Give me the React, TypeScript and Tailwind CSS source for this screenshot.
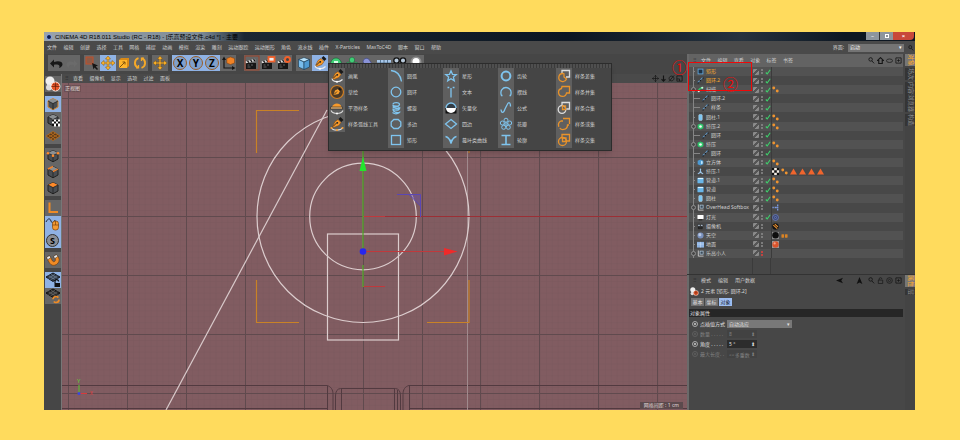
import React from "react";

const FONT = "font-['Noto_Sans','Noto_Sans_CJK_SC',sans-serif]";
const OR = "#e8922a";
const BL = "#7fc4ee";

/* ---------- icons, all on a 16 x 16 board ---------- */

const Cube = ({ face = "none", edge = "#c77a2a", fill = "#4a4e52" }: { face?: string; edge?: string; fill?: string }) => (
  <g strokeLinejoin="round">
    <path d="M8 2.5 13 5v6l-5 2.8L3 11V5z" fill={fill} stroke={edge} strokeWidth="1" />
    <path d="M8 2.5 13 5 8 7.6 3 5z" fill={face === "top" ? "#ff8a2a" : "#8b8f92"} />
    <path d="M8 7.6v6.2M3 5l5 2.6L13 5" fill="none" stroke="#222" strokeWidth=".8" />
  </g>
);

const Clapper = () => (
  <g>
    <path d="M2 8h10v6H2z" fill="#161616" />
    <path d="M1.600 6.500 11 3.800l.5 2.200-9.400 2.300z" fill="#ddd" />
    <path d="m3.500 6 1.500 1.600M6.500 5.100 8 6.800M9.500 4.300 11 6" stroke="#111" strokeWidth="1.300" />
    <path d="M3.500 10h2M7 10h2M3.500 12h3" stroke="#777" strokeWidth=".8" />
  </g>
);

const Nib = () => (
  <g>
    <path d="M3.500 10.500 6 5.500l3-2 3 3-2 3-5.200 2z" fill="#f79a2b" stroke="#7a4210" strokeWidth=".5" />
    <path d="m9.500 3 2-2 3 3-2.200 2z" fill="#181818" />
    <path d="m4 10.500 4-4" stroke="#222" strokeWidth=".9" />
    <circle cx="8.300" cy="6.800" r=".9" fill="#222" />
  </g>
);

const shapes: Record<string, React.ReactNode> = {
  undo: <path d="M2 8.500 6 4.500V7c4.500-1.600 8.500-.5 8.500 2.300 0 1.700-1.500 3.200-3.500 3.700 1.500-2.500-.5-4-5-3.200v2.700z" fill="#171717" />,
  redo: <path d="M13.500 8.500 10 5v2.200c-4-1.600-7.500-.5-7.500 2.300 0 1.500 1 2.700 2.700 3.300-1-2.500 1-3.500 4.800-2.600V12z" fill="#6b6b6b" />,
  select: (
    <g>
      <rect x="2" y="2" width="7" height="7" fill="#8d5b47" stroke="#c1502a" />
      <path d="m8 8 6 2.500-2.300 1 2.300 2.500-1 1-2.500-2.500-1 2z" fill="#151515" />
    </g>
  ),
  move: (
    <path
      d="M8 1 10.500 4H8.800v3.200H12V5.500L15 8l-3 2.500V8.800H8.800V12h1.700L8 15l-2.500-3h1.700V8.800H4v1.700L1 8l3-2.500v1.700h3.200V4H5.500z"
      fill="#ffb52b"
      stroke="#7d5310"
      strokeWidth=".5"
    />
  ),
  scale: (
    <g>
      <path d="M3 5h8v8H3z" fill="#ffb52b" />
      <path d="m3 5 2-2h8v8l-2 2V5z" fill="#d98a17" />
      <path d="M3.500 12.500 9 7M9 9.500V7H6.500" stroke="#7d5310" fill="none" />
    </g>
  ),
  rotate: (
    <g fill="none" stroke="#f6a928" strokeWidth="1.900">
      <path d="M6.500 3.200A5 5 0 0 0 6 12.600M9.500 12.800A5 5 0 0 0 10 3.400" />
      <path d="m4 12.800 2.500 0V10M12 3.200H9.500V6" strokeWidth="1.300" />
    </g>
  ),
  axis: (
    <g>
      <path d="M4 4v9h9" fill="none" stroke="#151515" strokeWidth="1.200" />
      <path d="M4 1.500 6 5H2zM15.500 13 12 11v4z" fill="#151515" />
      <path d="m10.500 2 4 1.500v4.500L10.500 9.500 6.800 8V3.500z" fill="#f08326" stroke="#7a3a0a" strokeWidth=".5" />
    </g>
  ),
  clapA: (
    <g>
      <rect x="1" y="1" width="14" height="14" fill="none" stroke="#9d4229" />
      <Clapper />
    </g>
  ),
  clapB: (
    <g>
      <Clapper />
      <rect x="8.500" y="2" width="6" height="4.500" fill="#eee" stroke="#f0602a" strokeWidth="1.800" />
    </g>
  ),
  clapC: (
    <g>
      <Clapper />
      <circle cx="11.500" cy="4.500" r="2.500" fill="#444" stroke="#f0602a" strokeWidth="2" />
    </g>
  ),
  prim: (
    <g stroke="#17364d" strokeWidth=".6" strokeLinejoin="round">
      <path d="m2.500 4.500 5.500-2 5.500 2L8 7z" fill="#b7e2fb" />
      <path d="M2.500 4.500 8 7v7.500L2.500 12z" fill="#79bdec" />
      <path d="M13.500 4.500 8 7v7.500l5.500-2.500z" fill="#4f9bd2" />
    </g>
  ),
  pen: (
    <g>
      <Nib />
      <path d="M3 10.500c.5 3.500 7 4.500 10.500 1" fill="none" stroke="#eee" strokeWidth="1.100" />
      <circle cx="8" cy="13.700" r="1" fill="#fff" />
    </g>
  ),
  nurbs: (
    <g>
      <path d="M2.500 12c-1-5 2-9 5.500-9s6.500 4 5.500 9z" fill="#3fcf76" stroke="#145c30" strokeWidth=".6" />
      <rect x="6" y="6" width="4" height="4" fill="#d8ffe6" />
    </g>
  ),
  array: (
    <g fill="#3fcf76" stroke="#145c30" strokeWidth=".5">
      <path d="m8 2 2.500 1.500v3L8 8 5.500 6.500v-3zM4 7l2.500 1.500v3L4 13l-2.500-1.500v-3zM12 7l2.500 1.500v3L12 13l-2.500-1.500v-3z" />
    </g>
  ),
  deform: <path d="M3 6c2-4 6-3 7 0 1 2 3 3 4 6-4 2-9 1-10-2z" fill="#8a93d8" stroke="#333a78" strokeWidth=".6" />,
  floor: (
    <g>
      <path d="M1 5h14v7H1z" fill="#a9c8ea" />
      <path d="M1 8h14M4.500 5v7M8 5v7M11.500 5v7" stroke="#46637f" strokeWidth=".8" />
    </g>
  ),
  camera: (
    <g fill="#b9cadb" stroke="#111" strokeWidth="1.300">
      <circle cx="4.500" cy="5.500" r="2.700" />
      <circle cx="11" cy="5.500" r="2.700" />
      <path d="M3 9h9v4H3z" fill="#333" />
    </g>
  ),
  light: (
    <g>
      <circle cx="8" cy="7" r="5.500" fill="#8f8f8f" />
      <circle cx="8" cy="6.500" r="3.500" fill="#fff" />
    </g>
  ),
  balls: (
    <g>
      <circle cx="5" cy="5" r="4.500" fill="#eee" />
      <circle cx="4" cy="11.500" r="3" fill="#ddd" />
      <circle cx="10.500" cy="10.500" r="4.500" fill="#e8582a" stroke="#fff" strokeWidth=".8" />
      <path d="M6.500 10.500h8M10.500 6.500v8M8 8c1.500 1.500 3.500 1.500 5 0" stroke="#69200b" strokeWidth=".7" fill="none" />
    </g>
  ),
  model: <Cube edge="#d98a2f" />,
  texture: (
    <g>
      <Cube edge="#1d1d1d" />
      <path d="M7 7.500h8v7H7z" fill="#fff" />
      <path d="M7 7.500h2v2H7zM11 7.500h2v2h-2zM9 9.500h2v2H9zM13 9.500h2v2h-2zM7 11.500h2v3H7zM11 11.500h2v3h-2z" fill="#111" />
    </g>
  ),
  plane: (
    <g stroke="#b46a1d" fill="#5a3a1a" strokeWidth=".9">
      <path d="M8 3.500 15 8l-7 4.500L1 8z" />
      <path d="m3.300 6.500 7 4.500M5.700 5l7 4.500M12.700 6.500l-7 4.500M10.300 5l-7 4.500" />
    </g>
  ),
  points: (
    <g>
      <Cube edge="#222" />
      <g fill="#ff8a2a"><circle cx="8" cy="7.800" r="1.300" /><circle cx="13" cy="5.300" r="1.300" /><circle cx="3" cy="5.300" r="1.300" /></g>
    </g>
  ),
  edges: (
    <g>
      <Cube edge="#222" />
      <path d="M3 5 8 2.500M8 7.600 13 5" stroke="#f2812a" strokeWidth="1.400" fill="none" />
    </g>
  ),
  polys: <Cube edge="#222" face="top" />,
  corner: <path d="M4.500 2.500v9.500H13" fill="none" stroke="#ee8b26" strokeWidth="2" />,
  mouse: (
    <g>
      <path d="M1 6c2-4 4-4 5-1s3 2 4-1" fill="none" stroke="#1f2a3a" strokeWidth="1" />
      <rect x="7.500" y="5" width="6" height="9" rx="2.600" fill="#f39a33" stroke="#7d430c" strokeWidth=".7" />
      <path d="M10.500 5v4M7.500 9h6" stroke="#7d430c" strokeWidth=".7" />
    </g>
  ),
  magnet: (
    <g>
      <path d="M1.500 5.500 4.500 3.500 7.500 9c1.500 2 4-.5 2.500-2.500L8.500 4.500l3-2 2 3c3 5-5 11.500-9 5.500z" fill="#ef8b26" stroke="#6d3806" strokeWidth=".6" />
      <path d="m1.500 5.500 3-2 1.200 2.200-3 2zM8.500 4.500l3-2 1.300 2-3 2z" fill="#eee" stroke="#222" strokeWidth=".5" />
    </g>
  ),
  gridLock: (
    <g>
      <path d="M8 1 15 5 8 9.500 1 5z" fill="#2f3a48" stroke="#14181e" />
      <path d="m3.500 3.700 7 4M6 2.400l6.500 4M12.500 3.700l-7 4M10 2.400l-6.500 4" stroke="#7d8fa5" strokeWidth=".6" />
      <path d="M10 11V9.500a1.800 1.800 0 0 1 3.600 0" fill="none" stroke="#111" strokeWidth="1.200" />
      <path d="M9.500 11H15v4H9.500z" fill="#111" />
    </g>
  ),
  gridTurn: (
    <g>
      <path d="M8 1 15 5 8 9.500 1 5z" fill="#2a2a2a" stroke="#111" />
      <path d="m3.500 3.700 7 4M6 2.400l6.500 4M12.500 3.700l-7 4M10 2.400l-6.500 4" stroke="#777" strokeWidth=".6" />
      <circle cx="11" cy="11.500" r="3" fill="none" stroke="#ee8b26" strokeWidth="1.700" strokeDasharray="7 2.400" />
    </g>
  ),
  sketch: (
    <g>
      <circle cx="8" cy="8" r="6.500" fill="#4c3a26" stroke="#d07f24" strokeWidth="1.200" />
      <path d="M4.500 11 6 6.500 9 5l2 2-1.500 3z" fill="#f9a02d" />
      <path d="m9 5 1.500-1.500 2 2L11 7z" fill="#181818" />
      <path d="m5 10.500 3-3" stroke="#222" strokeWidth=".8" />
    </g>
  ),
  smooth: (
    <g>
      <path d="M3 7c1-4 8-5 9.500 0z" fill="#f79a2b" />
      <path d="M1.500 7h12v2h-12z" fill="#e8b87a" stroke="#222" strokeWidth=".6" />
      <path d="M2 10.500c2 4 10 4 12 0" fill="none" stroke="#ddd" strokeWidth="1.100" />
      <circle cx="8" cy="13.500" r="1" fill="#fff" />
    </g>
  ),
  arcTool: (
    <g>
      <Nib />
      <path d="M2 11.500c2 3.500 9.500 3.500 12 0" fill="none" stroke="#ddd" strokeWidth="1.100" />
      <g fill="#f79a2b"><circle cx="2.500" cy="12" r="1" /><circle cx="8" cy="14" r="1" /><circle cx="13.500" cy="12" r="1" /></g>
    </g>
  ),
  arc: <path d="M3 2.500C9 3 12.500 7.500 13.500 13.500" />,
  circle: <circle cx="8" cy="8" r="4.800" />,
  helix: <path d="M5 4.500C5 2 11.500 2 11.500 4.500S5 6 5 5c0 4 7 4.500 7 2.500M5 8.500C5 6 11.500 6 11.500 8.500S5 10 5 9c0 4 7 4.500 7 2.500M4.500 12.500c2 1.500 5 1.500 7 0" />,
  ngon: <path d="M5.800 3.500h4.400l2.600 2.500v4l-2.600 2.500H5.800L3.200 10V6z" />,
  rect: <rect x="3.500" y="3.500" width="9" height="9" />,
  star: <path d="m8 2.800 1.500 3.500 3.800.3-2.900 2.500.9 3.700L8 10.800l-3.300 2 .9-3.700-2.900-2.500 3.800-.3z" />,
  text: <path d="M8 4v9.500M4.500 3.500h1.800M9.700 3.500h1.800" />,
  vector: (
    <g>
      <path d="M2.500 8v5.500h11V8z" fill="#111" stroke="none" />
      <path d="M3 8a5 5 0 0 0 10 0z" fill="#fff" stroke="none" />
      <path d="M3 8a5 5 0 0 1 10 0" fill="#333c44" />
    </g>
  ),
  four: <path d="m8 3.500 5.500 4.500L8 12.500 2.500 8z" />,
  cissoid: <path d="M2.500 4.500C5.500 5 7 7.500 8 11.500 9 7.500 10.500 5 13.500 4.500M8 7.500v4" />,
  cog: <circle cx="8" cy="8" r="4.400" strokeWidth="2" />,
  cycloid: <path d="M4.500 11.500H3.500C1.500 6.500 5 3.500 8 3.500s6.500 3 4.500 8h-1" />,
  formula: <path d="M3 9.500c.5 4 2.500 4 4-.5L9 5c1.500-3.500 3.500-3 3.500 1.500" />,
  flower: (
    <g strokeWidth="1">
      <circle cx="8" cy="8" r="1.300" />
      <circle cx="8" cy="4.200" r="2" /><circle cx="11.700" cy="7" r="2" /><circle cx="10.300" cy="11.300" r="2" /><circle cx="5.700" cy="11.300" r="2" /><circle cx="4.300" cy="7" r="2" />
    </g>
  ),
  profile: <path d="M3.500 3.500h9M3.500 12.500h9M8 3.500v9" strokeWidth="1.600" />,
  subtract: (
    <g>
      <path d="M6 6V2.500h7.500V9H10" stroke="#ddd" />
      <path d="M7 5.500a4 4 0 1 0 3.500 5.500L8 9V6z" stroke={OR} />
    </g>
  ),
  union: <path d="M6 2.500h7.500V9h-3a4 4 0 1 1-5-4.500z" stroke={OR} />,
  and: (
    <g>
      <path d="M6 5V2.500h7.500V9h-3" stroke="#ddd" />
      <circle cx="6" cy="9.500" r="3.800" stroke="#ddd" />
      <path d="M6.500 6H9.500v3.500H6.500z" stroke={OR} />
    </g>
  ),
  or: <path d="M7 2.500h6.500V9h-2a4.500 4.500 0 1 1-6.500-4L7 5" stroke={OR} strokeDasharray="12 1.500" />,
  intersect: (
    <g stroke={OR}>
      <path d="M6 5V2.500h7.500V9h-3" />
      <circle cx="6.500" cy="9.500" r="4" />
      <path d="M6.500 6H10v3.500H6.500z" />
    </g>
  ),
  spline: (
    <g>
      <path d="M2 14c1-8 5-3 6-6s1-6 6-6" stroke="#6aaee8" strokeWidth="2.200" fill="none" />
      <path d="M1 12h3v3H1zM6.500 7h2.500v2.500H6.500zM12.500 1H15v3h-2.500z" fill="#151515" />
    </g>
  ),
  square: <rect x="2.500" y="2.500" width="11" height="11" fill="#1f3244" stroke="#5fa6dc" strokeWidth="2" />,
  sweep: (
    <g>
      <path d="M3 13c1-6 4-8 9-9" stroke="#2fbf68" strokeWidth="3.500" fill="none" />
      <circle cx="12" cy="4" r="2.500" fill="#c9ffdc" />
      <circle cx="4" cy="12" r="2.200" fill="#eee" />
    </g>
  ),
  extrude: (
    <g>
      <path d="m8 1 6.500 3.200v7.600L8 15l-6.500-3.200V4.200z" fill="#2fc86c" />
      <circle cx="8" cy="8" r="3" fill="#f2fff6" />
    </g>
  ),
  cylinder: <rect x="4" y="1" width="8" height="14" rx="2.500" fill="#7cc6f2" stroke="#cdeafb" />,
  tube: (
    <g>
      <rect x="1" y="1.500" width="14" height="13" rx="2" fill="#69b6e8" />
      <path d="M2 3.500h12" stroke="#d9f1ff" strokeWidth="2.500" />
    </g>
  ),
  box: (
    <g>
      <path d="m8 1 6.500 3.200v7.600L8 15l-6.500-3.200V4.200z" fill="#4c9ad3" />
      <path d="m9 4 4 1.500v5L9 12z" fill="#bfe5fb" />
    </g>
  ),
  figure: <path d="M8 1c2 0 2 3 1 4l1 4 5 4-2 1.500-5-3-5 3L1 13l5-4 1-4C6 4 6 1 8 1z" fill="#9cc6e8" />,
  nullObj: (
    <g>
      <path d="M3 1v13h12" fill="none" stroke="#ddd" strokeWidth="1.800" />
      <rect x="7" y="2.500" width="7" height="7" fill="#3b4a58" stroke="#bcd6ea" strokeWidth="1.500" />
    </g>
  ),
  lamp: (
    <g>
      <rect x="1" y="2" width="14" height="9.500" rx="1.500" fill="#fff" />
      <path d="M4 12h8v2.500H4z" fill="#222" />
    </g>
  ),
  sky: (
    <g>
      <circle cx="8" cy="8" r="7" fill="#7991bd" />
      <circle cx="6.500" cy="6" r="3.500" fill="#b7c7e3" />
    </g>
  ),
  ground: (
    <g>
      <path d="M0 2h16v13H0z" fill="#8fb4e3" />
      <path d="M0 7h16M8 2v13" stroke="#dbe9fa" />
    </g>
  ),
  dots: <g fill="#f09430"><circle cx="4" cy="4.500" r="3.300" /><circle cx="12" cy="11.500" r="3.300" /></g>,
  check: (
    <g>
      <path d="M0 0h16v16H0z" fill="#f5efe6" />
      <path d="M0 0h5v5H0zM11 0h5v5h-5zM5 5h6v6H5zM0 11h5v5H0zM11 11h5v5h-5z" fill="#111" />
    </g>
  ),
  tri: <path d="M8 1 16 15H0z" fill="#f0652d" />,
  target: <g fill="#3a4670" stroke="#7285c8" strokeWidth="1.600"><circle cx="8" cy="8" r="6.800" /><circle cx="8" cy="8" r="2.500" /></g>,
  nodes: <path d="M1 8h3M6 8h5M13 1v4M13 6.500v3M13 11v4" stroke="#7d9be0" strokeWidth="3" />,
  ban: (
    <g>
      <circle cx="8" cy="8" r="7.500" fill="#141414" />
      <path d="M3 5 12 13M6.500 2.500l7 6.500" stroke="#f09430" strokeWidth="2.500" />
    </g>
  ),
  matDark: (
    <g>
      <path d="M0 0h16v16H0z" fill="#8a8a8a" />
      <circle cx="8" cy="7.500" r="7.500" fill="#0e0e0e" />
    </g>
  ),
  matRed: (
    <g>
      <path d="M0 0h16v16H0z" fill="#999" />
      <circle cx="8" cy="8" r="7.300" fill="#d9542d" />
      <circle cx="6" cy="5.500" r="2.600" fill="#f5a184" />
    </g>
  ),
  bino: <g fill="#d98324"><rect x="1" y="5" width="6" height="8" rx="1" /><rect x="9" y="5" width="6" height="8" rx="1" /></g>,
  search: (
    <g fill="none" stroke="#161616" strokeWidth="2">
      <circle cx="6" cy="5.500" r="4" />
      <path d="m9 9 5 5.500" />
    </g>
  ),
  home: <path d="M8 1.500 15 8h-3v7H4V8H1z" fill="none" stroke="#161616" strokeWidth="2.600" />,
  eye: <ellipse cx="8" cy="8.500" rx="7" ry="4" fill="none" stroke="#1c1c1c" strokeWidth="1.800" />,
  boxPlus: <path d="M2 2h12v12H2zM8 5v6M5 8h6" fill="none" stroke="#161616" strokeWidth="1.800" />,
  lock: <path d="M3 7h10v8H3zM5 7V4.500a3 3 0 0 1 6 0" fill="none" stroke="#1c1c1c" strokeWidth="1.800" />,
  ring: <g fill="none" stroke="#1c1c1c" strokeWidth="1.800"><circle cx="8" cy="8" r="6.500" /><circle cx="8" cy="8" r="2.500" /></g>,
  left: <path d="M16 1.500 12 8l4 6.500L0 8z" fill="#101010" />,
  up: <path d="m8 0 6.500 16L8 12.500 1.500 16z" fill="#101010" />,
  pan: <path d="M8 1v14M1 8h14M5.500 3.500 8 1l2.500 2.500M5.500 12.500 8 15l2.500-2.500M3.500 5.500 1 8l2.500 2.500M12.500 5.500 15 8l-2.500 2.500" fill="none" stroke="#141414" strokeWidth="1.600" />,
  down: <path d="M8 1v13M3.500 9.500 8 14l4.500-4.500" fill="none" stroke="#141414" strokeWidth="2.600" />,
  orbit: <path d="M8 2.500a5.500 5.500 0 1 0 .1 0zM14 1 2 15" fill="none" stroke="#141414" strokeWidth="1.800" />,
  frame: <path d="M2 2h12v12H2zM2 9h6v5" fill="none" stroke="#141414" strokeWidth="1.800" />,
};

const splineIcons = new Set(["arc", "circle", "helix", "ngon", "rect", "star", "text", "vector", "four", "cissoid", "cog", "cycloid", "formula", "flower", "profile", "subtract", "union", "and", "or", "intersect"]);

function Icon({ name, className = "size-4" }: { name: string; className?: string }) {
  const line = splineIcons.has(name);
  return (
    <svg viewBox="0 0 16 16" className={`block shrink-0 ${className}`} aria-hidden="true" fill={line ? "none" : undefined} stroke={line ? BL : undefined} strokeWidth={line ? 1.3 : undefined}>
      {shapes[name]}
    </svg>
  );
}

function AxisLetter({ letter }: { letter: string }) {
  return (
    <span className="flex size-[14px] items-center justify-center rounded-full border border-[#9a5f28] bg-[#7fa0cc] text-[10px] leading-none font-bold text-black">
      {letter}
    </span>
  );
}

/* ---------- top toolbar ---------- */

function ToolButton({ label, active, children }: { label: string; active?: boolean; children: React.ReactNode }) {
  return (
    <button aria-label={label} className={`flex size-4 items-center justify-center ${active ? "bg-[#8fb2e4]" : "bg-[#666]"}`}>
      {children}
    </button>
  );
}

function Toolbar() {
  return (
    <div className="flex h-5 items-start gap-1 overflow-hidden bg-[#464646] pt-px pl-1">
      <div className="flex">
        <ToolButton label="撤销"><Icon name="undo" /></ToolButton>
        <ToolButton label="重做"><Icon name="redo" /></ToolButton>
      </div>
      <div className="flex">
        <ToolButton label="选择"><Icon name="select" /></ToolButton>
        <ToolButton label="移动" active><Icon name="move" /></ToolButton>
        <ToolButton label="缩放"><Icon name="scale" /></ToolButton>
        <ToolButton label="旋转"><Icon name="rotate" /></ToolButton>
      </div>
      <ToolButton label="最近工具"><Icon name="move" /></ToolButton>
      <div className="flex">
        {["X", "Y", "Z"].map((l) => (
          <ToolButton key={l} label={l} active><AxisLetter letter={l} /></ToolButton>
        ))}
        <ToolButton label="坐标系统"><Icon name="axis" /></ToolButton>
      </div>
      <div className="ml-1 flex">
        {["clapA", "clapB", "clapC"].map((n) => (
          <ToolButton key={n} label={n}><Icon name={n} /></ToolButton>
        ))}
      </div>
      <div className="flex">
        {["prim", "pen", "nurbs", "array", "deform", "floor", "camera", "light"].map((n) => (
          <ToolButton key={n} label={n} active={n === "pen"}><Icon name={n} /></ToolButton>
        ))}
      </div>
    </div>
  );
}

/* ---------- left tool column ---------- */

const sideGroups: { icons: string[]; active: string[] }[] = [
  { icons: ["balls"], active: [] },
  { icons: ["model", "texture", "plane"], active: ["model"] },
  { icons: ["points", "edges", "polys"], active: [] },
  { icons: ["corner", "mouse", "S"], active: ["mouse", "S"] },
  { icons: ["magnet"], active: [] },
  { icons: ["gridLock", "gridTurn"], active: ["gridLock"] },
];

function SideTools() {
  return (
    <div className="flex w-[18px] shrink-0 flex-col items-center gap-1 border-r border-[#777] bg-[#464646] pt-[2px]">
      {sideGroups.map((g, i) => (
        <div key={i} className="flex flex-col">
          {g.icons.map((n) => (
            <ToolButton key={n} label={n} active={g.active.includes(n)}>
              {n === "S" ? (
                <span className="flex size-[13px] items-center justify-center rounded-full border border-[#333] bg-[#8a8f96] text-[9px] leading-none font-bold text-black">S</span>
              ) : (
                <Icon name={n} />
              )}
            </ToolButton>
          ))}
        </div>
      ))}
    </div>
  );
}

/* ---------- viewport ---------- */

const gridX = [68, 127, 186, 245, 304, 363, 422, 480, 539, 598, 657];
const gridY = [98, 157, 216, 275, 334, 393];

function Scene() {
  return (
    <svg viewBox="62 83 625 327" preserveAspectRatio="xMinYMin slice" className="absolute inset-0 size-full">
      <defs>
        <pattern id="fine" width="5.900" height="5.900" patternUnits="userSpaceOnUse" x="68" y="98">
          <path d="M0 0H5.900M0 0V5.900" stroke="#72525a" strokeWidth=".4" />
        </pattern>
      </defs>
      <rect x="62" y="83" width="625" height="327" fill="#815c61" />
      <rect x="62" y="83" width="625" height="327" fill="url(#fine)" />
      <g stroke="#604a4e" strokeWidth="1">
        {gridX.map((x) => <path key={x} d={`M${x + 0.5} 83V410`} />)}
        {gridY.map((y) => <path key={y} d={`M62 ${y + 0.5}H687`} />)}
      </g>
      <g fill="none" stroke="#523a40" strokeWidth="1">
        <path d="M62 385.500H327c4 1 6 4 6 9V410M327.500 386V410M687 385.500H409c-4 1-6 4-6 9V410M409.500 386V410" />
        <path d="M335.500 410v-14q0-7 5-7.500h55q5 .5 5 7.500v14M341.500 389v21M394.500 389v21M397.500 390v20M62 408.500H327M409 408.500H687" />
      </g>
      <path d="M467.500 150V410" stroke="#a08a8d" strokeWidth="1" />
      <path d="M166 410 327 110" stroke="#d9cacb" strokeWidth="1.200" />
      <g fill="none" stroke="#dccdce" strokeWidth="1.200">
        <circle cx="363" cy="216.500" r="106" />
        <circle cx="363" cy="216.500" r="53.300" />
        <rect x="327.500" y="234" width="71" height="106" />
      </g>
      <path d="M299 110.500H256.500V153M256.500 280V322.500H299M427 322.500H469V280M469 153V140" fill="none" stroke="#c98226" strokeWidth="1.200" />
      <path d="M363 216.500H385" stroke="#c0393c" />
      <path d="M385 216.500H687" stroke="#9c2f35" />
      <path d="M363 251.500H444M363 286.500H385" stroke="#c0393c" />
      <path d="M363 151V251M363 265V287" stroke="#58a82f" strokeWidth="1.300" />
      <path d="M363 156.500 366.500 171h-7z" fill="#22e62e" />
      <path d="M457.500 251.500 444 248v7.500z" fill="#f02a2a" />
      <path d="M409 194.500h11.500V206z" fill="#6a4fa0" fillOpacity=".5" />
      <path d="M397 194.500h23.500V217M409 194.500 420.500 206" fill="none" stroke="#5a47b4" />
      <circle cx="363" cy="251.500" r="3.300" fill="#2626ee" />
      <path d="M79 385v8" stroke="#5fae3a" strokeWidth="1.300" />
      <path d="M80 393.500h7" stroke="#d83a3a" />
      <circle cx="79" cy="393.500" r="1.500" fill="#3b45e0" />
      <text x="77" y="383" fontSize="6" fill="#5fc93a">Y</text>
      <text x="90" y="395" fontSize="5" fill="#e33b3b">X</text>
    </svg>
  );
}

function Viewport() {
  return (
    <div className="flex min-w-0 flex-1 flex-col">
      <div className="flex h-[9px] items-center justify-between bg-[#4a4a4a] pr-1 pl-[3px]">
        <div className="flex items-center gap-1">
          <span className="text-[#2c2c2c]">⠿</span>
          <nav className="flex w-[97px] justify-between">
            {["查看", "摄像机", "显示", "选项", "过滤", "面板"].map((t) => <button key={t}>{t}</button>)}
          </nav>
        </div>
        <div className="flex gap-px">
          {["pan", "down", "orbit", "frame"].map((n) => (
            <button key={n} aria-label={n}><Icon name={n} className="size-[7px]" /></button>
          ))}
        </div>
      </div>
      <div className="relative flex flex-1 flex-col justify-between overflow-hidden">
        <Scene />
        <span className="relative mt-[2px] ml-[2px] self-start bg-[#6b5054] px-px text-[#e0d8d8]">正视图</span>
        <span className="relative mr-1 mb-px self-end bg-[#5c4a4d] px-1 text-[#e0d8d8]">网格间距 : 1 cm</span>
      </div>
    </div>
  );
}

/* ---------- spline menu ---------- */

const splineMenu: { width: string; items: [string, string][] }[] = [
  { width: "w-[59px]", items: [["pen", "画笔"], ["sketch", "草绘"], ["smooth", "平滑样条"], ["arcTool", "样条弧线工具"]] },
  { width: "w-[55px]", items: [["arc", "圆弧"], ["circle", "圆环"], ["helix", "螺旋"], ["ngon", "多边"], ["rect", "矩形"]] },
  { width: "w-[55px]", items: [["star", "星形"], ["text", "文本"], ["vector", "矢量化"], ["four", "四边"], ["cissoid", "蔓叶类曲线"]] },
  { width: "w-[58px]", items: [["cog", "齿轮"], ["cycloid", "摆线"], ["formula", "公式"], ["flower", "花瓣"], ["profile", "轮廓"]] },
  { width: "w-[55px]", items: [["subtract", "样条差集"], ["union", "样条并集"], ["and", "样条合集"], ["or", "样条或集"], ["intersect", "样条交集"]] },
];

function SplineMenu() {
  return (
    <div role="menu" className="absolute top-[31px] left-[284px] border border-[#2c2c2c] bg-[#454545] pb-[2px] shadow-md">
      <div className="h-1 bg-[repeating-linear-gradient(90deg,#3a3a3a_0_1px,#4f4f4f_1px_3px)]" />
      <div className="flex">
        {splineMenu.map((col, i) => (
          <div key={i} className={`shrink-0 ${col.width}`}>
            {col.items.map(([icon, label]) => (
              <button role="menuitem" key={label} className="flex h-4 w-full items-center gap-[3px] whitespace-nowrap text-[#d0d0d0]">
                <span className="bg-[#5f5f5f]"><Icon name={icon} /></span>
                {label}
              </button>
            ))}
          </div>
        ))}
      </div>
    </div>
  );
}

/* ---------- object manager ---------- */

type Row = { icon: string; name: string; child?: boolean; open?: boolean; hot?: boolean; on?: boolean; red?: boolean; tags?: string[] };

const rows: Row[] = [
  { icon: "square", name: "矩形", hot: true, on: true },
  { icon: "spline", name: "圆环.2", hot: true, on: true },
  { icon: "sweep", name: "扫描", open: true, on: true, tags: ["dots"] },
  { icon: "spline", name: "圆环.2", child: true, on: true },
  { icon: "spline", name: "样条", child: true, on: true },
  { icon: "cylinder", name: "圆柱.1", on: true, tags: ["dots"] },
  { icon: "extrude", name: "挤压.2", open: true, on: true, tags: ["dots"] },
  { icon: "spline", name: "圆环", child: true, on: true },
  { icon: "extrude", name: "挤压", open: true, on: true, tags: ["dots"] },
  { icon: "spline", name: "圆环", child: true, on: true },
  { icon: "box", name: "立方体", on: true, tags: ["dots"] },
  { icon: "figure", name: "挤压.1", tags: ["check", "dots", "tri", "tri", "tri", "tri"] },
  { icon: "tube", name: "管道.1", on: true, tags: ["dots"] },
  { icon: "tube", name: "管道", on: true, tags: ["dots"] },
  { icon: "cylinder", name: "圆柱", on: true, tags: ["dots"] },
  { icon: "nullObj", name: "OverHead Softbox", open: true, tags: ["nodes"] },
  { icon: "lamp", name: "灯光", on: true, tags: ["target"] },
  { icon: "camera", name: "摄像机", tags: ["ban"] },
  { icon: "sky", name: "天空", tags: ["matDark", "bino"] },
  { icon: "ground", name: "地面", tags: ["matRed"] },
  { icon: "nullObj", name: "乐高小人", open: true, red: true },
];

function TreeRow({ row, even }: { row: Row; even: boolean }) {
  return (
    <li className={`flex min-h-0 flex-1 items-center ${even ? "bg-[#484848]" : "bg-[#525252]"}`}>
      <div className={`flex h-full w-[64px] shrink-0 items-center gap-[2px] overflow-hidden whitespace-nowrap ${row.hot ? "text-[#f7ab2c]" : "text-[#d0d0d0]"}`}>
        <span className={`flex h-full shrink-0 items-center justify-end ${row.child ? "w-[11px]" : "w-[6px]"}`}>
          <span className="relative ml-1 flex h-full flex-1 items-center border-l border-[#858585]">
            <span className="h-px w-full bg-[#858585]" />
            {row.open && <span className="absolute -left-[3px] size-[5px] rounded-full border border-[#909090] bg-[#474747]" />}
          </span>
        </span>
        <Icon name={row.icon} className="size-[7px]" />
        {row.name}
      </div>
      <div className="flex w-[18px] shrink-0 items-center gap-px">
        <span className="size-[6px] rounded-[1px] bg-[linear-gradient(135deg,#8a8a8a_40%,#555_40%_60%,#8a8a8a_60%)]" />
        <span className="mx-px flex flex-col gap-px">
          <i className={`size-[2px] rounded-full ${row.red ? "bg-[#e6403c]" : "bg-[#8c8c8c]"}`} />
          <i className={`size-[2px] rounded-full ${row.red ? "bg-[#e6403c]" : "bg-[#8c8c8c]"}`} />
        </span>
        {row.on && (
          <svg viewBox="0 0 6 6" className="size-[6px]" aria-hidden="true"><path d="M.8 3.500 2.200 5 5.200.8" fill="none" stroke="#3fd06c" strokeWidth="1.100" /></svg>
        )}
      </div>
      <div className="flex h-full flex-1 items-center gap-[2px] border-l border-[#3b3b3b]">
        {row.tags?.map((t, i) => <Icon key={i} name={t} className="size-[7px]" />)}
      </div>
    </li>
  );
}

function SideTabs({ tabs }: { tabs: string[] }) {
  return (
    <div className="flex w-[10px] shrink-0 flex-col gap-[2px] bg-[#444]">
      {tabs.map((t, i) => (
        <button
          key={t}
          className={`flex w-full items-center justify-center py-[2px] text-[6px] [text-orientation:sideways] [writing-mode:vertical-rl] ${i === 0 ? "bg-[#777] text-[#ffab2e]" : "bg-[#353535] text-[#909090]"}`}
        >
          {t}
        </button>
      ))}
    </div>
  );
}

function ObjectManager() {
  return (
    <section className="flex h-[220px] shrink-0">
      <div className="relative flex min-w-0 flex-1 flex-col border-l-2 border-[#6a6a6a] bg-[#474747] pr-[2px]">
        <div className="flex h-[13px] items-center justify-between bg-[#636363] pr-px pl-1 text-[#d0d0d0]">
          <div className="flex items-center gap-1">
            <span className="text-[#3a3a3a]">⠿</span>
            <nav className="flex w-[92px] justify-between">
              {["文件", "编辑", "查看", "对象", "标签", "书签"].map((t, i) => <button key={i}>{t}</button>)}
            </nav>
          </div>
          <div className="flex gap-[2px]">
            {["search", "home", "eye", "boxPlus"].map((n) => (
              <button key={n} aria-label={n}><Icon name={n} className="size-[7px]" /></button>
            ))}
          </div>
        </div>
        <ul className="flex h-[191px] flex-col">
          {rows.map((r, i) => <TreeRow key={i} row={r} even={i % 2 === 1} />)}
        </ul>
        <div className="flex flex-1">
          <div className="w-[64px] border-r border-[#3b3b3b]" />
          <div className="w-[18px] border-r border-[#3b3b3b]" />
        </div>
        {/* numbered callout over the two selected objects */}
        <div className="absolute top-2 -left-px h-[29px] w-[64px] border border-[#f00808]" />
        <span className="absolute top-[6px] -left-[17px] text-[15px] leading-none text-[#f00808]">①</span>
        <span className="absolute top-[23px] left-[34px] text-[15px] leading-none text-[#f00808]">②</span>
      </div>
      <SideTabs tabs={["对象", "场次", "内容浏览器", "构造"]} />
    </section>
  );
}

/* ---------- attribute manager ---------- */

function Radio({ on }: { on?: boolean }) {
  return (
    <span className={`flex size-[6px] shrink-0 items-center justify-center rounded-full border ${on ? "border-[#aaa]" : "border-[#5e5e5e]"}`}>
      <span className={`size-[2px] rounded-full ${on ? "bg-[#ccc]" : "bg-[#5e5e5e]"}`} />
    </span>
  );
}

function NumberRow({ id, label, value, on }: { id: string; label: string; value: string; on?: boolean }) {
  return (
    <div className={`flex h-[10px] items-center gap-[2px] ${on ? "text-[#e0e0e0]" : "text-[#808080]"}`}>
      <Radio on={on} />
      <label htmlFor={id} className="w-[25px] overflow-hidden whitespace-nowrap">{label}</label>
      <span className={`flex h-2 w-[30px] items-center px-[2px] ${on ? "bg-[#2c2c2c]" : "bg-[#424242]"}`}>
        <input id={id} defaultValue={value} disabled={!on} className="h-full w-0 flex-1 bg-transparent outline-none" />
        <span aria-hidden="true">⬍</span>
      </span>
    </div>
  );
}

function AttributeManager() {
  return (
    <section className="flex min-h-0 flex-1 border-t border-[#333]">
      <div className="flex min-w-0 flex-1 flex-col border-l-2 border-[#6a6a6a] bg-[#474747] pr-[2px]">
        <div className="flex h-[10px] items-center justify-between pr-px pl-1 text-[#d0d0d0]">
          <div className="flex items-center gap-1">
            <span className="text-[#2c2c2c]">⠿</span>
            <nav className="flex w-[54px] justify-between">
              {["模式", "编辑", "用户数据"].map((t) => <button key={t}>{t}</button>)}
            </nav>
          </div>
          <div className="flex gap-[2px]">
            <button aria-label="left" className="mr-[11px]"><Icon name="left" className="size-[7px]" /></button>
            <button aria-label="up" className="mr-[3px]"><Icon name="up" className="size-[7px]" /></button>
            {["search", "lock", "ring", "boxPlus"].map((n) => (
              <button key={n} aria-label={n}><Icon name={n} className="size-[7px]" /></button>
            ))}
          </div>
        </div>
        <div className="flex h-[13px] items-center gap-[2px] pl-px text-[#d8d8d8]">
          <Icon name="balls" className="size-[9px]" />
          2 元素 [矩形, 圆环.2]
        </div>
        <div className="flex h-2 gap-px pl-[2px]">
          {["基本", "坐标", "对象"].map((t) => (
            <button key={t} className={`w-[13px] ${t === "对象" ? "bg-[#9dbdf0] text-[#16202e]" : "bg-[#717171] text-[#e0e0e0]"}`}>{t}</button>
          ))}
        </div>
        <h2 className="mt-[3px] h-2 bg-[#262626] pl-px leading-[8px] text-[#e0e0e0]">对象属性</h2>
        <div className="flex flex-col pt-[2px] pl-[3px]">
          <div className="flex h-[10px] items-center gap-[2px] text-[#e0e0e0]">
            <Radio on />
            <label htmlFor="interp" className="w-[25px] whitespace-nowrap">点插值方式</label>
            <span className="relative flex h-2 w-[65px] items-center bg-[#787878]">
              <select id="interp" className="h-full w-full appearance-none bg-transparent px-[2px] leading-none outline-none">
                <option>自动适应</option>
              </select>
              <span aria-hidden="true" className="pointer-events-none absolute right-[2px]">▾</span>
            </span>
          </div>
          <NumberRow id="count" label="数量 . . . . ." value="8" />
          <NumberRow id="angle" label="角度 . . . . ." value="5 °" on />
          <NumberRow id="maxlen" label="最大长度. ." value="<<多重数" />
        </div>
      </div>
      <SideTabs tabs={["属性", "层"]} />
    </section>
  );
}

/* ---------- window ---------- */

const menus = ["文件", "编辑", "创建", "选择", "工具", "网格", "捕捉", "动画", "模拟", "渲染", "雕刻", "运动跟踪", "运动图形", "角色", "流水线", "插件", "X-Particles", "MaxToC4D", "脚本", "窗口", "帮助"];

export default function App() {
  return (
    <div className={`flex min-h-screen bg-[#ffdb5d] pt-8 pr-[45px] pb-[30px] pl-[44px] text-[5px] leading-[7px] text-[#d0d0d0] ${FONT}`}>
      <div className="relative flex min-w-0 flex-1 flex-col bg-[#464646]">
        <header className="flex h-[9px] items-center justify-between bg-[linear-gradient(90deg,#9aa3aa_0,#7f8c97_18%,#1b2733_23%,#0c1622_60%,#26323e_80%,#0d1722_92%)]">
          <h1 className="flex items-center gap-[3px] pl-[2px] font-['Liberation_Sans','Noto_Sans_CJK_SC',sans-serif] text-[6px] leading-none whitespace-nowrap text-black">
            <span className="size-[6px] rounded-full border border-[#8ea8e8] bg-[#0c1a4a]" />
            CINEMA 4D R18.011 Studio (RC - R18) - [乐高预设文件.c4d *] - 主要
          </h1>
          <div className="mr-px flex h-2 self-start text-[6px] leading-none text-white">
            <button aria-label="最小化" className="flex w-[14px] items-center justify-center border-r border-[#333] bg-[#8d959d]">–</button>
            <button aria-label="最大化" className="flex w-[13px] items-center justify-center bg-[#8d959d]"><span className="size-1 border border-white" /></button>
            <button aria-label="关闭" className="flex w-[21px] items-center justify-center rounded-br-sm bg-[#c8493a] font-bold">×</button>
          </div>
        </header>

        <div className="flex h-[13px] items-center justify-between bg-[#4a4a4a] pl-[3px]">
          <nav className="flex w-[394px] justify-between whitespace-nowrap">
            {menus.map((m) => <button key={m}>{m}</button>)}
          </nav>
          <div className="flex items-center gap-1 pr-px">
            <label htmlFor="layout">界面:</label>
            <span className="relative flex h-2 w-[56px] items-center bg-[#747474]">
              <select id="layout" className="h-full w-full appearance-none bg-transparent px-[2px] leading-none text-[#eee] outline-none">
                <option>启动</option>
              </select>
              <span aria-hidden="true" className="pointer-events-none absolute right-[2px] text-white">▾</span>
            </span>
            <button aria-label="搜索"><Icon name="search" className="size-[6px]" /></button>
          </div>
        </div>

        <div className="flex min-h-0 flex-1">
          <main className="flex min-w-0 flex-1 flex-col">
            <Toolbar />
            <div className="flex min-h-0 flex-1">
              <SideTools />
              <Viewport />
            </div>
          </main>
          <aside className="flex w-[228px] shrink-0 flex-col">
            <ObjectManager />
            <AttributeManager />
          </aside>
        </div>

        <SplineMenu />
      </div>
    </div>
  );
}
